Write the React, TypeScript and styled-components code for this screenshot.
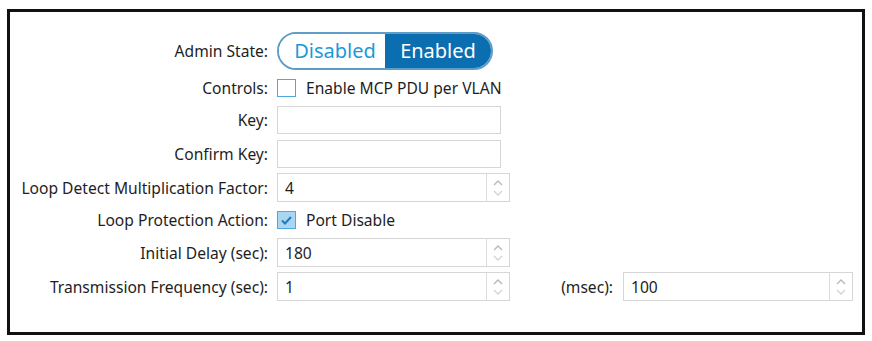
import React from 'react';
import styled, { createGlobalStyle } from 'styled-components';

const GlobalStyle = createGlobalStyle`
  html, body {
    margin: 0;
    padding: 0;
    background: #fff;
  }
  body {
    font-family: "Noto Sans", "Open Sans", Arial, sans-serif;
    color: #1e1e1e;
  }
`;

const Frame = styled.div`
  box-sizing: border-box;
  margin: 9px 0 0 7px;
  width: 858px;
  height: 326px;
  border: 3px solid #111;
  padding-top: 17px;
`;

const Form = styled.div`
  display: grid;
  grid-template-columns: 258px 1fr;
  column-gap: 9px;
`;

const Label = styled.div<{ $h: number }>`
  height: ${({ $h }) => $h}px;
  display: flex;
  align-items: center;
  justify-content: flex-end;
  font-size: 15.6px;
  white-space: nowrap;
`;

const Cell = styled.div<{ $h: number }>`
  height: ${({ $h }) => $h}px;
  display: flex;
  align-items: center;
`;

const Toggle = styled.div`
  display: flex;
  width: 216px;
  height: 38px;
  box-sizing: border-box;
  border: 2px solid #5f9cc6;
  border-radius: 19px;
  overflow: hidden;
  font-size: 20px;
`;

const ToggleHalf = styled.div<{ $on?: boolean }>`
  flex: ${({ $on }) => ($on ? '0 0 106px' : '1')};
  display: flex;
  align-items: center;
  justify-content: center;
  background: ${({ $on }) => ($on ? '#0a6eb1' : '#fff')};
  color: ${({ $on }) => ($on ? '#fff' : '#1b9ad9')};
  padding-left: ${({ $on }) => ($on ? '0' : '6px')};
`;

const CheckRow = styled.label`
  display: flex;
  align-items: center;
  gap: 10px;
  font-size: 15.6px;
`;

const Box = styled.span<{ $checked?: boolean }>`
  box-sizing: border-box;
  width: 19px;
  height: 18px;
  border: 1.5px solid #4fa9e0;
  background: ${({ $checked }) => ($checked ? '#a9d6f2' : '#fff')};
  display: flex;
  align-items: center;
  justify-content: center;
`;

const TextBox = styled.div`
  box-sizing: border-box;
  width: 224px;
  height: 28px;
  border: 1px solid #d6d6d6;
  background: #fff;
`;

const Spin = styled.div<{ $w: number }>`
  box-sizing: border-box;
  width: ${({ $w }) => $w}px;
  height: 29px;
  border: 1px solid #d6d6d6;
  display: flex;
  font-size: 15.6px;
`;

const SpinValue = styled.div`
  flex: 1;
  display: flex;
  align-items: center;
  padding-left: 7px;
`;

const SpinArrows = styled.div`
  width: 22px;
  border-left: 1px solid #dcdcdc;
  display: flex;
  align-items: center;
  justify-content: center;
`;

const SubLabel = styled.div`
  width: 103px;
  text-align: right;
  font-size: 15.6px;
  margin-right: 10px;
  align-self: center;
`;

const Check = () => (
  <svg width="13" height="11" viewBox="0 0 13 11">
    <path d="M2 5.5 L5 8.5 L11 2" fill="none" stroke="#2a78b5" strokeWidth="2" />
  </svg>
);

const Arrows = () => (
  <svg width="14" height="22" viewBox="0 0 14 22">
    <path d="M3 8 L7 4 L11 8" fill="none" stroke="#b8b8b8" strokeWidth="1.4" />
    <path d="M3 14 L7 18 L11 14" fill="none" stroke="#d4d4d4" strokeWidth="1.4" />
  </svg>
);

const SpinInput = ({ value, w = 233 }: { value: string; w?: number }) => (
  <Spin $w={w}>
    <SpinValue>{value}</SpinValue>
    <SpinArrows>
      <Arrows />
    </SpinArrows>
  </Spin>
);

export default function App() {
  return (
    <>
      <GlobalStyle />
      <Frame>
        <Form>
          <Label $h={43}>Admin State:</Label>
          <Cell $h={43}>
            <Toggle>
              <ToggleHalf>Disabled</ToggleHalf>
              <ToggleHalf $on>Enabled</ToggleHalf>
            </Toggle>
          </Cell>

          <Label $h={31}>Controls:</Label>
          <Cell $h={31}>
            <CheckRow>
              <Box />
              Enable MCP PDU per VLAN
            </CheckRow>
          </Cell>

          <Label $h={33}>Key:</Label>
          <Cell $h={33}>
            <TextBox />
          </Cell>

          <Label $h={35}>Confirm Key:</Label>
          <Cell $h={35}>
            <TextBox />
          </Cell>

          <Label $h={33}>Loop Detect Multiplication Factor:</Label>
          <Cell $h={33}>
            <SpinInput value="4" />
          </Cell>

          <Label $h={32}>Loop Protection Action:</Label>
          <Cell $h={32}>
            <CheckRow>
              <Box $checked>
                <Check />
              </Box>
              Port Disable
            </CheckRow>
          </Cell>

          <Label $h={33}>Initial Delay (sec):</Label>
          <Cell $h={33}>
            <SpinInput value="180" />
          </Cell>

          <Label $h={35}>Transmission Frequency (sec):</Label>
          <Cell $h={35}>
            <SpinInput value="1" />
            <SubLabel>(msec):</SubLabel>
            <SpinInput value="100" w={230} />
          </Cell>
        </Form>
      </Frame>
    </>
  );
}
